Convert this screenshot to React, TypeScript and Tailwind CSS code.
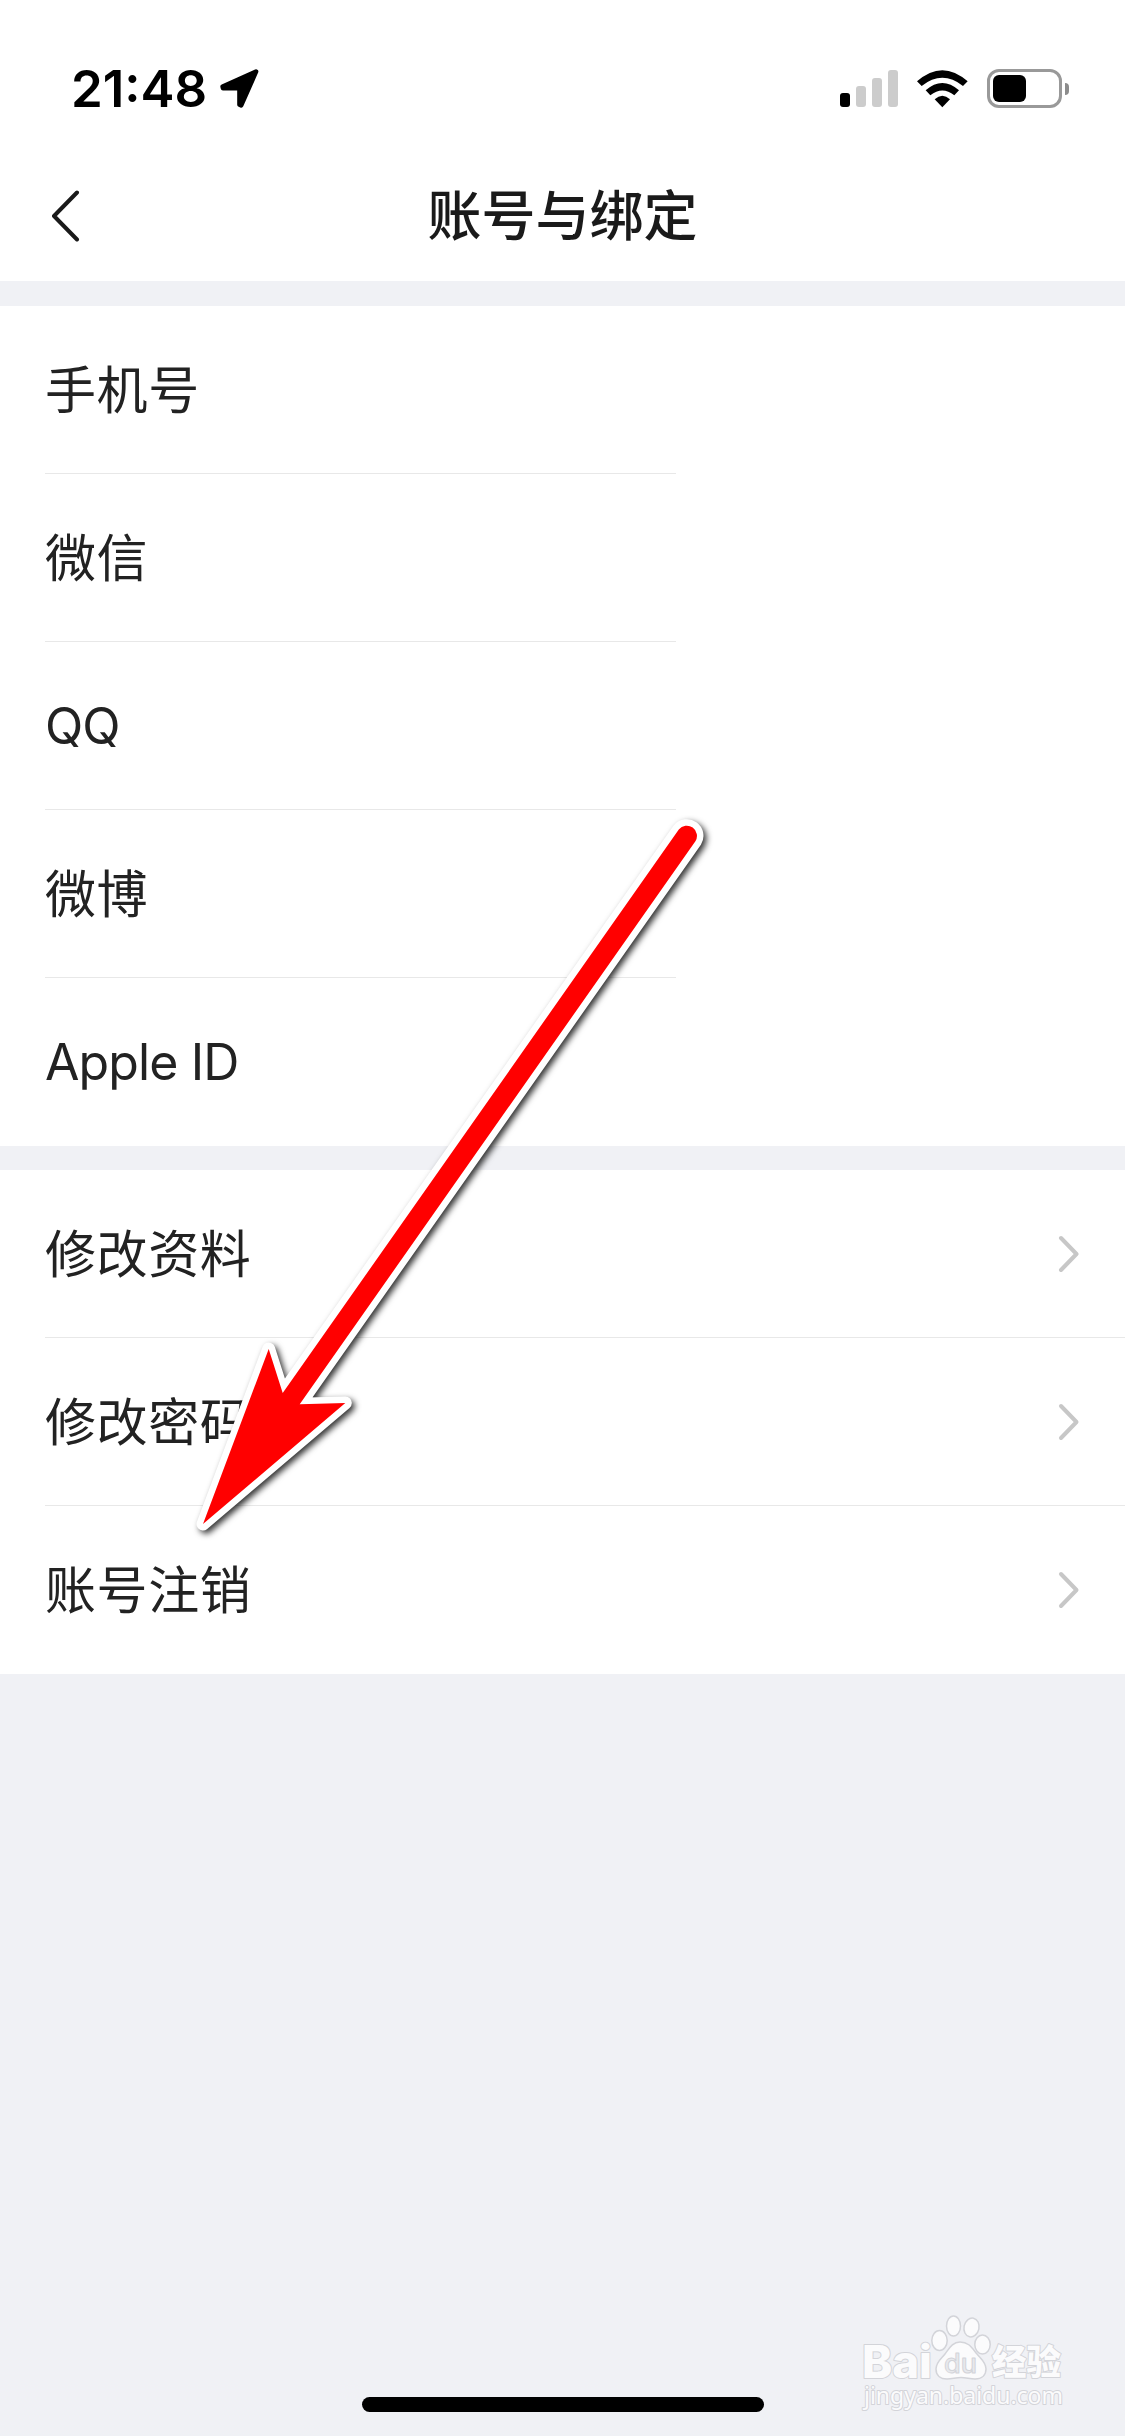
import React from 'react';

interface RowItem {
    label: string;
    latin?: boolean;
}

const accounts: RowItem[] = [
    { label: '手机号' },
    { label: '微信' },
    { label: 'QQ', latin: true },
    { label: '微博' },
    { label: 'Apple ID', latin: true },
];

const settings: RowItem[] = [
    { label: '修改资料' },
    { label: '修改密码' },
    { label: '账号注销' },
];

const StatusBar = () => (
    <div className="flex h-[132px] items-start justify-between pl-[71px] pr-[56px] pt-[63px] text-black">
        <div className="flex h-[51px] items-center">
            <span className="w-[149px] text-[51px] font-semibold leading-[51px]">21:48</span>
            <svg className="h-[39px] w-[39px]" viewBox="540 89 118 118">
                <path d="M649 97 L548 142 L549 147 H599 V197 L604 199 Z" stroke="currentColor" strokeWidth="14" strokeLinejoin="round" />
            </svg>
        </div>
        <div className="flex h-[51px] items-center">
            <div className="flex h-[37px] items-end gap-[6px]">
                <span className="h-[14px] w-[10px] rounded-[3px] bg-black" />
                <span className="h-[21px] w-[10px] rounded-[3px] bg-[#cccccc]" />
                <span className="h-[29px] w-[10px] rounded-[3px] bg-[#cccccc]" />
                <span className="h-[37px] w-[10px] rounded-[3px] bg-[#cccccc]" />
            </div>
            <svg className="ml-[19px] h-[38px] w-[51px]" viewBox="321 59 153 114">
                <path d="M321 93 Q397 26 473 93 L459 107 Q397 58 335 107 Z" />
                <path d="M347 120 Q397 76 447 120 L433 135 Q397 106 361 135 Z" />
                <path d="M374 147 Q397 126 420 147 L397 171 Z" />
            </svg>
            <div className="ml-[19px] h-[39px] w-[75px] rounded-[12px] border-[3px] border-[#999999] p-[3px]">
                <div className="h-[27px] w-[33px] rounded-[6px] bg-black" />
            </div>
            <span className="ml-[3px] h-[12px] w-[4px] rounded-r-full bg-[#8c8c8c]" />
        </div>
    </div>
);

const NavBar = () => (
    <header className="grid h-[149px] grid-cols-[160px_1fr_160px] pb-[12px] text-[#1a1a1a]">
        <button aria-label="返回" className="flex items-center pl-[51px] pt-[31px]">
            <svg className="h-[52px] w-[30px]" viewBox="0 0 30 52" fill="none">
                <path d="M26 2.5 L3 26 L26 49.5" stroke="currentColor" strokeWidth="4" strokeLinecap="round" strokeLinejoin="round" />
            </svg>
        </button>
        <h1 className="pt-[33px] text-center text-[54px] font-medium leading-[104px]">账号与绑定</h1>
    </header>
);

const Chevron = () => (
    <svg className="h-[38px] w-[22px]" viewBox="0 0 22 38" fill="none">
        <path d="M3 3 L18.5 19 L3 35" stroke="#c7c7c7" strokeWidth="4" strokeLinecap="round" strokeLinejoin="round" />
    </svg>
);

const RowLabel = ({ item }: { item: RowItem }) => (
    <span
        className={
            item.latin
                ? 'text-[50px] leading-[60px] tracking-[-0.9px]'
                : 'pt-[2px] text-[51px] leading-[60px] tracking-[0.6px]'
        }
    >
        {item.label}
    </span>
);

const AccountRow = ({ item, last }: { item: RowItem; last: boolean }) => (
    <li
        className={`ml-[45px] flex h-[168px] w-[631px] items-center border-b ${last ? 'border-transparent' : 'border-[#e8e8e8]'}`}
    >
        <RowLabel item={item} />
    </li>
);

const SettingRow = ({ item, last }: { item: RowItem; last: boolean }) => (
    <li
        className={`ml-[45px] flex h-[168px] items-center justify-between border-b pr-[45px] ${last ? 'border-transparent' : 'border-[#e8e8e8]'}`}
    >
        <RowLabel item={item} />
        <Chevron />
    </li>
);

// Red pointer drawn over the list
const Pointer = () => (
    <svg className="pointer-events-none absolute left-[180px] top-[800px] h-[760px] w-[560px]" viewBox="180 800 560 760">
        <path
            className="[filter:drop-shadow(3px_3px_3px_rgba(0,0,0,0.8))]"
            d="M203 1524 L268.7 1349 L282.7 1393 L678.8 829.5 A10.2 10.2 0 0 1 695.4 841.3 L299.7 1404.3 L345.3 1403 Z"
            fill="#ff0000"
            stroke="#ffffff"
            strokeWidth="13"
            strokeLinejoin="round"
        />
        <path
            d="M203 1524 L268.7 1349 L282.7 1393 L678.8 829.5 A10.2 10.2 0 0 1 695.4 841.3 L299.7 1404.3 L345.3 1403 Z"
            fill="#ff0000"
        />
    </svg>
);

const Watermark = () => (
    <svg
        className="absolute left-[840px] top-[2290px] h-[146px] w-[285px]"
        viewBox="0 0 285 146"
        fill="#fbfbfc"
        stroke="#d3d4d9"
        strokeWidth="2"
        strokeLinejoin="round"
    >
        <g paintOrder="stroke">
            <text x="22" y="87.500" fontSize="45" fontWeight="800" fontFamily="Inter, sans-serif" textLength="70" lengthAdjust="spacingAndGlyphs">Bai</text>
            <text x="152" y="85" fontSize="35" fontWeight="900" fontFamily="'Noto Sans CJK SC', sans-serif" textLength="69" lengthAdjust="spacingAndGlyphs">经验</text>
            <text x="24" y="114" fontSize="23" strokeWidth="2" fontFamily="'Noto Sans', sans-serif" textLength="199" lengthAdjust="spacingAndGlyphs">jingyan.baidu.com</text>
        </g>
        <g strokeWidth="1.500">
            <ellipse cx="99.5" cy="50.5" rx="7.7" ry="10" />
            <ellipse cx="113.5" cy="36" rx="7" ry="10" />
            <ellipse cx="131.5" cy="37.5" rx="7.5" ry="9.5" transform="rotate(12 131.5 37.5)" />
            <ellipse cx="142.5" cy="54.5" rx="7.7" ry="9.5" />
            <path d="M120 52 C112 52 109 59 105 64 C101 69 96 72 96 79 C96 86 101 89 107 89 C112 89 116 87.500 121 87.500 C126 87.500 130 89 135 89 C142 89 146 85 146 79 C146 72 141 69 137 64 C132 58 129 52 120 52 Z" />
        </g>
        <text x="104" y="83" fontSize="27" fontWeight="500" fill="#e8e9ed" strokeWidth="1" fontFamily="Inter, sans-serif" textLength="33" lengthAdjust="spacingAndGlyphs">du</text>
    </svg>
);

export default function App() {
    return (
        <div className="relative flex h-[2436px] w-[1125px] flex-col overflow-hidden bg-[#f0f1f5] font-['Inter','Noto_Sans_CJK_SC',sans-serif] text-[#222222]">
            <div className="bg-white">
                <StatusBar />
                <NavBar />
            </div>

            <ul className="mt-[24px] border-t border-[#f0f1f5] bg-white">
                {accounts.map((item, index) => (
                    <AccountRow key={item.label} item={item} last={index === accounts.length - 1} />
                ))}
            </ul>

            <ul className="mt-[24px] bg-white">
                {settings.map((item, index) => (
                    <SettingRow key={item.label} item={item} last={index === settings.length - 1} />
                ))}
            </ul>

            {/* Home indicator */}
            <div className="mb-[24px] ml-[362px] mt-auto h-[15px] w-[402px] rounded-full bg-black" />

            <Pointer />
            <Watermark />
        </div>
    );
}
